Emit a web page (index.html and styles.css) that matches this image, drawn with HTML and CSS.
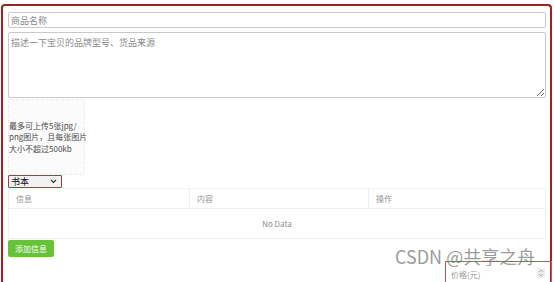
FILE: index.html
```html
<!DOCTYPE html>
<html lang="zh">
<head>
  <meta charset="UTF-8"/>
  <title>发布商品</title>
  <link rel="stylesheet" href="styles.css">
</head>
<body>
  <div class="frame">
    <input class="field" type="text" placeholder="商品名称"/>
    <textarea class="desc" placeholder="描述一下宝贝的品牌型号、货品来源"></textarea>

    <div class="upload">
      <p>最多可上传5张jpg/<br>png图片，且每张图片<br>大小不超过500kb</p>
    </div>

    <div class="cat">
      <span>书本</span>
      <svg width="7" height="5" viewBox="0 0 7 5"><path d="M1 1l2.5 2.5L6 1" fill="none" stroke="#333" stroke-width="1.2"/></svg>
    </div>

    <table class="info">
      <thead><tr><th>信息</th><th>内容</th><th>操作</th></tr></thead>
      <tbody><tr><td colspan="3" class="empty">No Data</td></tr></tbody>
    </table>

    <button class="add">添加信息</button>

    <div class="price-row">
      <div class="price">
        <span class="ph">价格(元)</span>
        <span class="spin">
          <svg width="6" height="8" viewBox="0 0 6 8"><path d="M1 3l2-2 2 2M1 5l2 2 2-2" fill="none" stroke="#999" stroke-width="0.8"/></svg>
        </span>
      </div>
    </div>
  </div>
  <div class="mark">CSDN @共享之舟</div>
</body>
</html>
```

FILE: styles.css
```css
body { margin:0; background:#fff; font-family:"Noto Sans CJK SC", "Noto Sans", sans-serif; overflow:hidden; }
.frame { margin:4px 0 0 1px; width:538px; height:300px; padding:6px 4px 0 5px; border:2px solid #a3201f; border-bottom:none; border-radius:4px 4px 0 0; }

.field { display:block; box-sizing:border-box; width:538px; height:16px; margin:0; padding:0 2px; border:1px solid #c8c8c8; border-radius:2px; font:9px "Noto Sans CJK SC", sans-serif; }
.field::placeholder, .desc::placeholder { color:#8a8a8a; }
.desc { display:block; box-sizing:border-box; width:538px; height:66px; margin:4px 0 0; padding:3px 2px; border:1px solid #c8c8c8; border-radius:2px; font:9px "Noto Sans CJK SC", sans-serif; resize:both; }

.upload { box-sizing:border-box; width:77px; height:76px; margin-top:1px; display:flex; align-items:center; border:1px dashed #ececec; border-radius:3px; background:#fbfbfb; }
.upload p { margin:0; font-size:8px; line-height:11.6px; color:#4a4a4a; white-space:nowrap; }

.cat { box-sizing:border-box; width:54px; height:13px; display:flex; align-items:center; justify-content:space-between; padding:0 4px 0 2px; border:1px solid #b0393b; border-radius:1px; background:#f2f2f2; font-size:9px; line-height:11px; color:#111; }

.info { width:538px; border-collapse:collapse; font-size:8px; line-height:10px; color:#909399; }
.info th { height:19px; padding:0 7px; font-weight:normal; text-align:left; border:1px solid #eeeff3; border-top-color:#f3f3f3; }
.info th:nth-child(1) { width:166px; }
.info th:nth-child(2) { width:164px; }
.info td { padding:0; border:1px solid #eeeff3; border-top:none; }
.info .empty { height:29px; text-align:center; color:#8c8c8c; }

.add { display:block; width:46px; height:17px; margin-top:1px; padding:0; border:none; border-radius:2px; background:#67c23a; color:#fff; font:8px "Noto Sans CJK SC", sans-serif; }

.price-row { display:flex; justify-content:flex-end; margin:4px -6px 0 0; }
.price { box-sizing:border-box; width:107px; height:30px; display:flex; justify-content:space-between; padding:8px 6px 0 5px; border:1px solid #c95556; }
.ph { font-size:8px; line-height:10px; color:#9a9a9a; }
.spin { width:8px; height:10px; margin-top:-2px; display:flex; align-items:center; justify-content:center; background:#eee; border-radius:1px; }

.mark { position:absolute; left:395px; top:247px; font:18px/18px "Noto Sans CJK SC", sans-serif; color:rgba(110,110,110,0.7); pointer-events:none; }
```
